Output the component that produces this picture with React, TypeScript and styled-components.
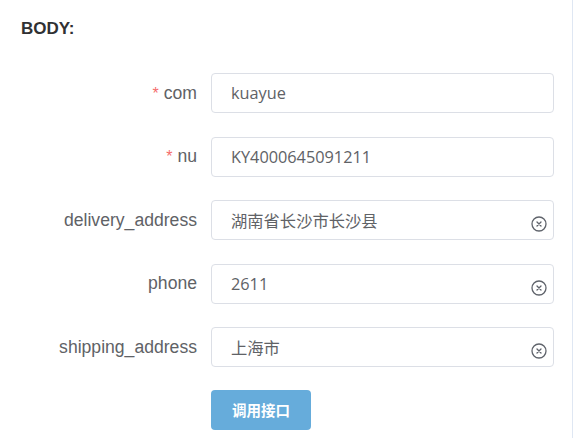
import React from "react";
import styled, { createGlobalStyle } from "styled-components";

const Global = createGlobalStyle`
  html, body { margin: 0; padding: 0; background: #ffffff; }
  body { font-family: "Liberation Sans", Arial, sans-serif; }
  * { box-sizing: border-box; }
`;

const Page = styled.div`
  width: 573px;
  min-height: 438px;
  border-right: 1px solid #dfe7f3;
  padding: 19px 0 0 0;
`;

const Title = styled.div`
  padding-left: 21px;
  font-family: "Liberation Sans", Arial, sans-serif;
  font-weight: bold;
  font-size: 17px;
  line-height: 20px;
  color: #303133;
  margin-bottom: 34px;
`;

const Form = styled.div`
  display: flex;
  flex-direction: column;
  gap: 23.5px;
`;

const Row = styled.div`
  display: flex;
  align-items: center;
  height: 40px;
`;

const Label = styled.label`
  width: 197px;
  margin-right: 14px;
  text-align: right;
  font-family: "Liberation Sans", Arial, sans-serif;
  font-size: 17.6px;
  color: #606266;
  white-space: nowrap;
`;

const Star = styled.span`
  color: #f56c6c;
  margin-right: 5px;
  font-size: 16px;
`;

const InputWrap = styled.div`
  position: relative;
  width: 343px;
  height: 40px;
`;

const Input = styled.input`
  width: 100%;
  height: 100%;
  border: 1px solid #dcdfe6;
  border-radius: 4px;
  padding: 0 30px 0 19px;
  font-family: "Open Sans", "Noto Sans CJK SC", sans-serif;
  font-size: 16.3px;
  color: #606266;
  background: #fff;
  outline: none;
`;

const Clear = styled.span`
  position: absolute;
  right: 7px;
  top: 16px;
  width: 16px;
  height: 16px;
  display: flex;
`;

const ButtonRow = styled.div`
  padding-left: 211px;
  margin-top: -1px;
`;

const Button = styled.button`
  width: 100px;
  height: 40px;
  border: none;
  border-radius: 4px;
  background: #66acdb;
  color: #ffffff;
  font-family: "Noto Sans CJK SC", sans-serif;
  font-weight: bold;
  font-size: 14.5px;
  cursor: pointer;
`;

const ClearIcon = () => (
  <svg width="16" height="16" viewBox="0 0 16 16" fill="none">
    <circle cx="8" cy="8" r="7" stroke="#5f636b" strokeWidth="1.3" />
    <path d="M6 6 L10 10 M10 6 L6 10" stroke="#5f636b" strokeWidth="1.3" strokeLinecap="round" />
  </svg>
);

type Field = { label: string; value: string; required?: boolean; clearable?: boolean };

const fields: Field[] = [
  { label: "com", value: "kuayue", required: true },
  { label: "nu", value: "KY4000645091211", required: true },
  { label: "delivery_address", value: "湖南省长沙市长沙县", clearable: true },
  { label: "phone", value: "2611", clearable: true },
  { label: "shipping_address", value: "上海市", clearable: true },
];

export default function App() {
  return (
    <>
      <Global />
      <Page>
        <Title>BODY:</Title>
        <Form>
          {fields.map((f) => (
            <Row key={f.label}>
              <Label>
                {f.required && <Star>*</Star>}
                {f.label}
              </Label>
              <InputWrap>
                <Input defaultValue={f.value} readOnly />
                {f.clearable && (
                  <Clear>
                    <ClearIcon />
                  </Clear>
                )}
              </InputWrap>
            </Row>
          ))}
          <ButtonRow>
            <Button>调用接口</Button>
          </ButtonRow>
        </Form>
      </Page>
    </>
  );
}
